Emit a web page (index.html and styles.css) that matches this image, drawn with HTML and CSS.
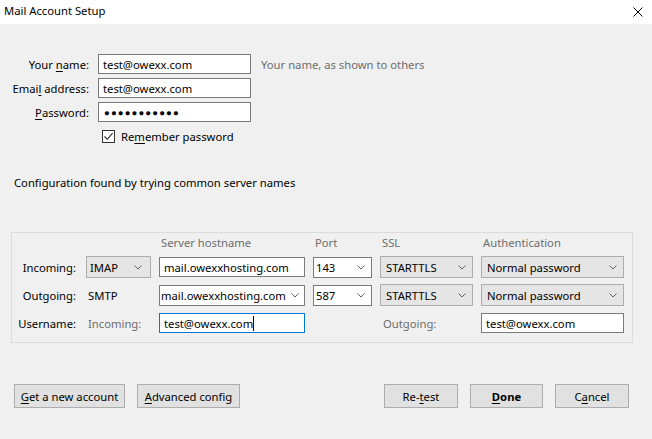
FILE: index.html
```html
<!DOCTYPE html>
<html>
<head>
<meta charset="utf-8">
<link rel="stylesheet" href="styles.css">
</head>
<body>
<div class="titlebar">
  <span class="title">Mail Account Setup</span>
  <svg class="close" width="10" height="10" viewBox="0 0 10 10"><path d="M0.5 0.5 L9.5 9.5 M9.5 0.5 L0.5 9.5" stroke="#000" stroke-width="1" fill="none"/></svg>
</div>
<div class="content">
  <div class="identity">
    <div class="lbl"><span>Your <u>n</u>ame:</span></div>
    <div class="field"><span>test@owexx.com</span></div>
    <div class="hint"><span>Your name, as shown to others</span></div>
    <div class="lbl"><span>Emai<u>l</u> address:</span></div>
    <div class="field"><span>test@owexx.com</span></div>
    <div></div>
    <div class="lbl"><span><u>P</u>assword:</span></div>
    <div class="field pw"><span>●●●●●●●●●●●</span></div>
    <div></div>
    <div></div>
    <div class="check"><span class="box"><svg width="11" height="11" viewBox="0 0 11 11"><path d="M1.5 5.5 L4.2 8.3 L9.6 2.2" stroke="#222" stroke-width="1.1" fill="none"/></svg></span><span>Re<u>m</u>ember password</span></div>
    <div></div>
  </div>

  <p class="status">Configuration found by trying common server names</p>

  <div class="group">
    <div></div><div></div>
    <div class="colhead">Server hostname</div>
    <div class="colhead">Port</div>
    <div class="colhead">SSL</div>
    <div class="colhead">Authentication</div>

    <div class="rowlbl">Incoming:</div>
    <div class="select gray imap"><span>IMAP</span><svg class="chev" width="8" height="5" viewBox="0 0 8 5"><path d="M0.5 0.5 L4 4 L7.5 0.5" stroke="#606060" fill="none"/></svg></div>
    <div class="field host"><span>mail.owexxhosting.com</span></div>
    <div class="select white port"><span>143</span><svg class="chev" width="8" height="5" viewBox="0 0 8 5"><path d="M0.5 0.5 L4 4 L7.5 0.5" stroke="#606060" fill="none"/></svg></div>
    <div class="select gray ssl"><span>STARTTLS</span><svg class="chev" width="8" height="5" viewBox="0 0 8 5"><path d="M0.5 0.5 L4 4 L7.5 0.5" stroke="#606060" fill="none"/></svg></div>
    <div class="select gray auth"><span>Normal password</span><svg class="chev" width="8" height="5" viewBox="0 0 8 5"><path d="M0.5 0.5 L4 4 L7.5 0.5" stroke="#606060" fill="none"/></svg></div>

    <div class="rowlbl">Outgoing:</div>
    <div class="plain">SMTP</div>
    <div class="select white combo"><span>mail.owexxhosting.com</span><svg class="chev" width="8" height="5" viewBox="0 0 8 5"><path d="M0.5 0.5 L4 4 L7.5 0.5" stroke="#606060" fill="none"/></svg></div>
    <div class="select white port"><span>587</span><svg class="chev" width="8" height="5" viewBox="0 0 8 5"><path d="M0.5 0.5 L4 4 L7.5 0.5" stroke="#606060" fill="none"/></svg></div>
    <div class="select gray ssl"><span>STARTTLS</span><svg class="chev" width="8" height="5" viewBox="0 0 8 5"><path d="M0.5 0.5 L4 4 L7.5 0.5" stroke="#606060" fill="none"/></svg></div>
    <div class="select gray auth"><span>Normal password</span><svg class="chev" width="8" height="5" viewBox="0 0 8 5"><path d="M0.5 0.5 L4 4 L7.5 0.5" stroke="#606060" fill="none"/></svg></div>

    <div class="rowlbl">Username:</div>
    <div class="plain muted">Incoming:</div>
    <div class="field host focused"><span class="caret">test@owexx.com</span></div>
    <div></div>
    <div class="plain muted outlbl">Outgoing:</div>
    <div class="field host"><span>test@owexx.com</span></div>
  </div>

  <div class="buttons">
    <div class="btngroup">
      <div class="btn w-get"><span><u>G</u>et a new account</span></div>
      <div class="btn w-adv"><span><u>A</u>dvanced config</span></div>
    </div>
    <div class="btngroup">
      <div class="btn w-retest"><span>Re-<u>t</u>est</span></div>
      <div class="btn w-done bold"><span><u>D</u>one</span></div>
      <div class="btn w-cancel"><span>C<u>a</u>ncel</span></div>
    </div>
  </div>
</div>
</body>
</html>
```

FILE: styles.css
```css
* { box-sizing: border-box; }
html, body {
  margin: 0;
  padding: 0;
  background: #f0f0f0;
  font-family: "Segoe UI", "Noto Sans", "Open Sans", sans-serif;
  font-size: 11.25px;
  color: #000;
}
u { text-decoration: underline; text-underline-offset: 2px; }

.titlebar {
  height: 24px;
  background: #fff;
  display: flex;
  align-items: center;
  justify-content: space-between;
  padding: 0 9px 0 4px;
}
.title { line-height: 16px; margin-top: -2px; }
.close { display: block; }

.content { display: flex; flex-direction: column; }

.identity {
  display: grid;
  grid-template-columns: 89px 153px auto;
  grid-auto-rows: 20px;
  column-gap: 9px;
  row-gap: 4px;
  padding-top: 30px;
}
.lbl {
  display: flex;
  align-items: center;
  justify-content: flex-end;
  white-space: nowrap;
}
.field {
  background: #fff;
  border: 1px solid #7a7a7a;
  display: flex;
  align-items: center;
  padding: 0 4px;
  white-space: nowrap;
  overflow: hidden;
  height: 20px;
}
.pw { font-size: 9.6px; letter-spacing: 1.1px; padding-left: 5px; }
.hint {
  color: #6d6d6d;
  display: flex;
  align-items: center;
  margin-left: 1px;
  white-space: nowrap;
}
.check {
  display: flex;
  align-items: center;
  gap: 6px;
  padding-left: 4px;
  white-space: nowrap;
}
.box {
  width: 13px;
  height: 13px;
  border: 1px solid #333;
  background: #fff;
  display: flex;
  align-items: center;
  justify-content: center;
}
.box svg { display: block; }

.status {
  margin: 29px 0 0 14px;
  line-height: 16px;
}

.group {
  margin: 41px 0 0 11px;
  width: 622px;
  height: 111px;
  border: 1px solid #dcdcdc;
  display: grid;
  grid-template-columns: 66px 65px 146px 59px 93px 143px;
  grid-template-rows: 14px 22px 22px 22px;
  column-gap: 8px;
  row-gap: 6px;
  padding-top: 3px;
  align-items: center;
}
.colhead {
  color: #6d6d6d;
  line-height: 14px;
  padding-left: 2px;
  white-space: nowrap;
}
.rowlbl {
  text-align: right;
  padding-right: 2px;
}
.plain { padding-left: 2px; white-space: nowrap; }
.muted { color: #6d6d6d; }
.outlbl { padding-left: 3px; }

.select {
  height: 22px;
  display: flex;
  align-items: center;
  white-space: nowrap;
  padding-left: 5px;
}
.select .chev { margin-left: auto; margin-right: 6px; display: block; flex: none; }
.gray { background: #e5e5e5; border: 1px solid #adadad; }
.white { background: #fff; border: 1px solid #7a7a7a; height: 21px; }
.imap { padding-left: 3px; }
.imap .chev { margin-right: 8px; }
.port { padding-left: 2px; }
.combo { padding-left: 1px; }
.combo .chev { margin-right: 5px; }
.host { height: 20px; }
.focused { border-color: #0078d7; }
.caret { border-right: 1px solid #000; line-height: 15px; }

.buttons {
  margin-top: 41px;
  display: flex;
  justify-content: space-between;
  padding: 0 23px 0 14px;
}
.btngroup { display: flex; gap: 12px; }
.btn {
  height: 24px;
  background: #e1e1e1;
  border: 1px solid #adadad;
  display: flex;
  align-items: center;
  justify-content: center;
  white-space: nowrap;
}
.bold { font-weight: bold; }
.w-get { width: 111px; }
.w-adv { width: 103px; }
.w-retest { width: 74px; }
.w-done { width: 73px; }
.w-cancel { width: 74px; }
```
